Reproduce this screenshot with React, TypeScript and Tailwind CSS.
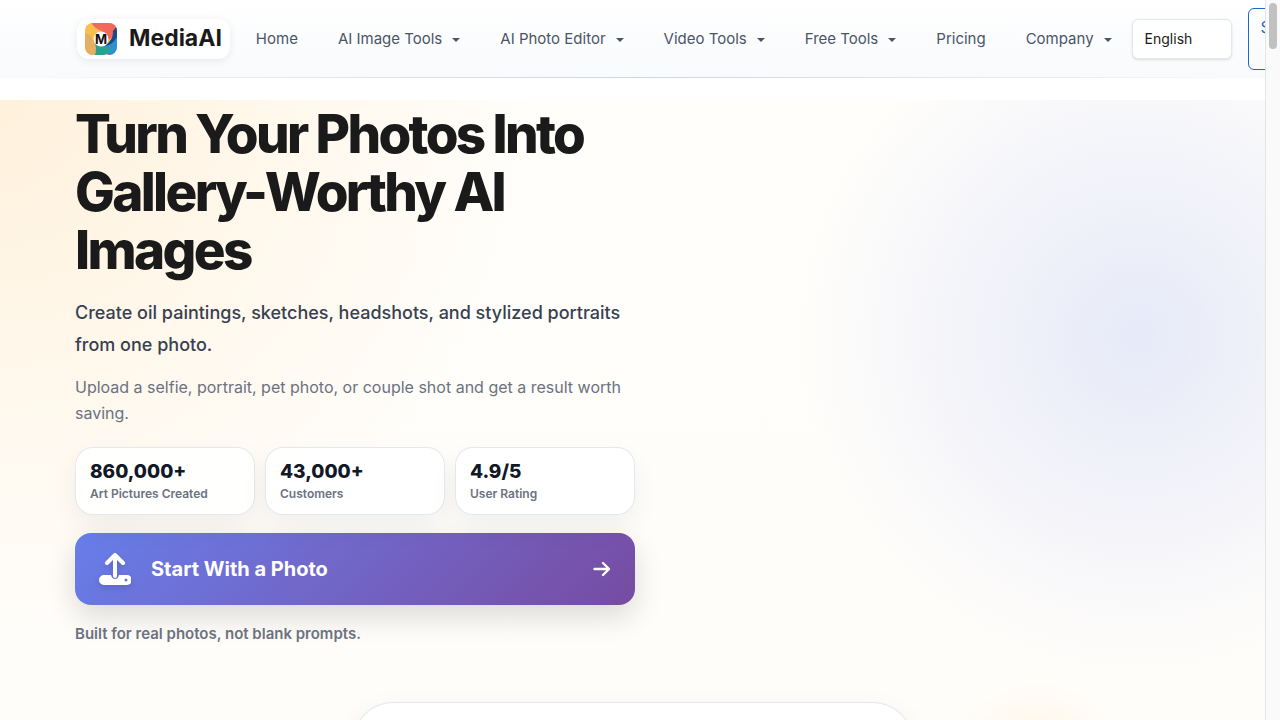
import React, { FC } from "react";

interface NavItem {
  label: string;
  dropdown: boolean;
}

interface Stat {
  value: string;
  label: string;
}

const navItems: NavItem[] = [
  { label: "Home", dropdown: false },
  { label: "AI Image Tools", dropdown: true },
  { label: "AI Photo Editor", dropdown: true },
  { label: "Video Tools", dropdown: true },
  { label: "Free Tools", dropdown: true },
  { label: "Pricing", dropdown: false },
  { label: "Company", dropdown: true },
];

const stats: Stat[] = [
  { value: "860,000+", label: "Art Pictures Created" },
  { value: "43,000+", label: "Customers" },
  { value: "4.9/5", label: "User Rating" },
];

const Logo: FC = () => (
  <svg viewBox="0 0 32 32" className="size-8 shrink-0" aria-hidden="true">
    <defs>
      <clipPath id="logo-clip">
        <rect width="32" height="32" rx="8" />
      </clipPath>
    </defs>
    <g clipPath="url(#logo-clip)">
      <rect width="32" height="32" fill="#fbbf4d" />
      <path d="M6 0H32V6Q28 14 24 17L16 8Q10 6 6 0Z" fill="#f2695c" />
      <path d="M32 3V20Q26 24 19 24Q29 16 28 8Z" fill="#174a86" />
      <path d="M32 14V32H24Q16 28 14 23Q26 25 32 14Z" fill="#2f8fd0" />
      <path d="M9 19Q14 26 26 24Q25 30 19 32H9Q11 26 9 19Z" fill="#25a392" />
      <path d="M0 10Q9 12 10 20Q12 26 10 32H0Z" fill="#e5b066" />
      <path d="M0 5Q7 12 8 18Q10 9 17 8Q10 6 6 0H0Z" fill="#fbbf4d" />
      <circle cx="16" cy="16" r="7.5" fill="#fff" />
      <text
        x="16"
        y="21"
        textAnchor="middle"
        className="fill-[#111] font-[Inter] text-[13px] font-bold"
      >
        M
      </text>
    </g>
  </svg>
);

const Header: FC = () => (
  <header className="bg-linear-to-b from-white to-[#f8fafc]">
    <div className="flex h-[77px] items-center pl-[77px]">
      <a
        href="#"
        className="flex h-10 shrink-0 items-center gap-3 rounded-xl bg-white px-2 text-[23px] font-bold text-[#1a1a1a] shadow-[0_2px_8px_rgba(0,0,0,0.08)]"
      >
        <Logo />
        MediaAI
      </a>
      <nav className="ml-[6px] flex shrink-0 items-center pt-[2px]">
        {navItems.map((item) => (
          <a
            key={item.label}
            href="#"
            className="flex items-center gap-[10px] px-5 text-[15px] whitespace-nowrap text-[#4a5568]"
          >
            {item.label}
            {item.dropdown && (
              <span className="border-x-4 border-t-4 border-x-transparent border-t-current" />
            )}
          </a>
        ))}
      </nav>
      <select
        aria-label="Language"
        className="h-10 w-[100px] shrink-0 appearance-none rounded-md border border-[#e2e8f0] bg-white px-3 text-sm text-[#1a1a1a] shadow-sm"
      >
        <option>English</option>
      </select>
      <button className="ml-4 shrink-0 rounded-md border border-[#1e66d0] px-3 py-[6px] text-base text-[#1e66d0]">
        Sign
        <br />
        In
      </button>
    </div>
    <div className="h-px bg-linear-to-r from-transparent via-[#cbd5e0] to-transparent" />
  </header>
);

const Hero: FC = () => (
  <section className="flex-1 bg-[radial-gradient(circle_at_0%_0%,rgba(255,214,153,0.32),transparent_36%),radial-gradient(circle_340px_at_90%_235px,rgba(102,126,234,0.16),transparent),radial-gradient(circle_90px_at_82%_670px,rgba(255,215,140,0.28),transparent),linear-gradient(#fffefb,#fffdfa)]">
    <div className="px-[75px] pt-[5px]">
      <div className="max-w-[560px]">
        <h1 className="text-[53px] leading-[58px] font-extrabold tracking-tighter text-[#1a1a1a]">
          Turn Your Photos Into Gallery-Worthy AI Images
        </h1>
        <p className="mt-[18px] text-lg leading-8 font-medium text-[#374151]">
          Create oil paintings, sketches, headshots, and stylized portraits from
          one photo.
        </p>
        <p className="mt-[13px] text-base leading-[26px] text-[#6b7280]">
          Upload a selfie, portrait, pet photo, or couple shot and get a result
          worth saving.
        </p>
        <ul className="mt-[21px] grid grid-cols-3 gap-[10px]">
          {stats.map((stat) => (
            <li
              key={stat.label}
              className="flex flex-col rounded-[18px] border border-[#94a3b8]/25 bg-white/90 px-[14px] pt-3 pb-[10px] shadow-[0_12px_28px_rgba(15,23,42,0.06)]"
            >
              <strong className="text-[19px] leading-6 font-extrabold text-[#111827]">
                {stat.value}
              </strong>
              <span className="text-xs leading-5 font-semibold text-[#6b7280]">
                {stat.label}
              </span>
            </li>
          ))}
        </ul>
        <a
          href="#"
          className="mt-[18px] flex h-[72px] items-center rounded-2xl bg-linear-135 from-[#667eea] to-[#764ba2] px-6 text-xl font-bold text-white shadow-[0_12px_30px_rgba(0,0,0,0.14)]"
        >
          <svg
            viewBox="0 0 32 32"
            className="mr-5 size-8 drop-shadow-md"
            aria-hidden="true"
          >
            <path
              d="M5 22H12Q13 26 16 26Q19 26 20 22H28A5 5 0 0 1 28 32H5A5 5 0 0 1 5 22Z"
              fill="currentColor"
            />
            <circle cx="27" cy="27" r="1.5" fill="#6a76dc" />
            <path
              d="M16 23V3M8 10L16 2L24 10"
              fill="none"
              stroke="currentColor"
              strokeWidth="4"
              strokeLinecap="round"
              strokeLinejoin="round"
            />
          </svg>
          Start With a Photo
          <svg
            viewBox="0 0 18 18"
            className="ml-auto size-[18px]"
            fill="none"
            stroke="currentColor"
            strokeWidth="2.4"
            strokeLinecap="round"
            strokeLinejoin="round"
            aria-hidden="true"
          >
            <path d="M1.5 9H16M10 3L16 9L10 15" />
          </svg>
        </a>
        <p className="mt-[17px] text-[15px] leading-6 font-semibold text-[#6b7280]">
          Built for real photos, not blank prompts.
        </p>
      </div>
    </div>
    <div className="mx-auto mt-14 h-40 w-[560px] rounded-[40px] border border-[#94a3b8]/25 bg-white shadow-[0_12px_30px_rgba(15,23,42,0.08)]" />
  </section>
);

const App: FC = () => (
  <div className="flex h-screen bg-white font-[Inter,sans-serif]">
    <div className="flex min-w-0 flex-1 flex-col overflow-hidden">
      <Header />
      <main className="mt-[22px] flex flex-1 flex-col">
        <Hero />
      </main>
    </div>
    <div className="w-[15px] shrink-0 border-l border-[#e5e5e5] bg-[#fafafa] px-[3px] pt-[3px]">
      <div className="h-[46px] rounded-full bg-[#c1c1c1]" />
    </div>
  </div>
);

export default App;
